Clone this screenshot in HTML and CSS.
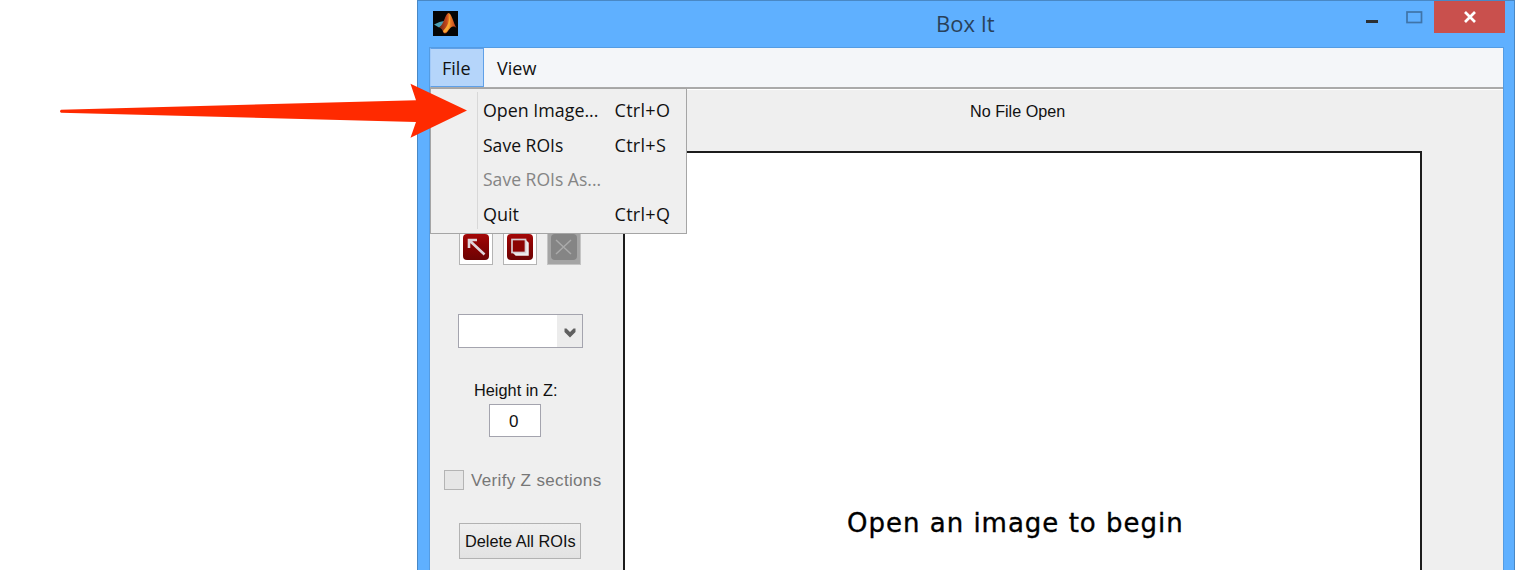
FILE: index.html
```html
<!DOCTYPE html>
<html lang="en">
<head>
<meta charset="utf-8">
<title>Box It</title>
<link rel="stylesheet" href="styles.css">
</head>
<body>
<div class="window">
  <header class="titlebar">
    <svg class="app-icon" viewBox="0 0 25 25">
      <defs>
        <linearGradient id="peak" x1="0" x2="1"><stop offset="0" stop-color="#6a2414"/><stop offset=".45" stop-color="#c8481c"/><stop offset=".6" stop-color="#f08a2a"/><stop offset="1" stop-color="#b8301a"/></linearGradient>
      </defs>
      <rect width="25" height="25" fill="#050505"/>
      <path d="M1 13.500 L6.500 11 L11 10 L14 5 L10 14 L6 16.500 Z" fill="#4b9fb5"/>
      <path d="M6 16.500 C11 14 12 3 15.500 2 C18.500 2 20 11 23.500 17 C20 14 17.500 16 15 20 C13.500 22.500 12 23 10.500 22 C9.500 19 8.500 17 6 16.500 Z" fill="url(#peak)"/>
      <path d="M16 3 C17 9 15 15 10 20 C11 23 13.500 22 15 19 C17 16 18 10 16 3 Z" fill="#f9a733"/>
    </svg>
    <h1 class="title">Box It</h1>
    <div class="controls">
      <svg class="min-max" viewBox="0 0 70 32"><rect x="2" y="19" width="12" height="3" fill="#2b2f33"/><rect x="43" y="11" width="14.500" height="10.500" fill="none" stroke="#3f74a8" stroke-width="1.700"/></svg>
      <div class="close"><svg viewBox="0 0 14 12"><path d="M2 1 L12 11 M12 1 L2 11" stroke="#fff" stroke-width="2.700"/></svg></div>
    </div>
  </header>
  <div class="client">
    <nav class="menubar">
      <div class="menu-item active">File</div>
      <div class="menu-item">View</div>
    </nav>
    <div class="workspace">
      <aside class="sidebar">
        <div class="tools">
          <div class="tool"><svg viewBox="0 0 26 26"><rect width="26" height="26" rx="4" fill="url(#red)"/><defs><linearGradient id="red" x1="0" y1="0" x2="0" y2="1"><stop offset="0" stop-color="#a40808"/><stop offset=".4" stop-color="#8c0303"/><stop offset="1" stop-color="#6c0404"/></linearGradient></defs><path d="M6 14 V6 H14 M7 7 L21.500 20.500" fill="none" stroke="#e0d5da" stroke-width="2.600"/></svg></div>
          <div class="tool"><svg viewBox="0 0 26 26"><rect width="26" height="26" rx="4" fill="url(#red)"/><path d="M7 19 H19 V7 L21 9 V21 H9 Z" fill="#eee" stroke="#eee" stroke-width="1.500"/><rect x="5" y="5.500" width="13.500" height="13" fill="#8c0303" stroke="#d8cdd2" stroke-width="1.700"/></svg></div>
          <div class="tool disabled"><svg viewBox="0 0 26 26"><rect width="26" height="26" rx="4" fill="#858585"/><path d="M5 6 L20 20 M20 6 L5 20" stroke="#aaa" stroke-width="1.500"/></svg></div>
        </div>
        <div class="combo"><div class="combo-arrow"><svg viewBox="0 0 12 10"><path d="M.500 .500 L2.500 .500 L6 4 L9.500 .500 L11.500 .500 V4 L6 9.500 L.500 4 Z" fill="#606060"/></svg></div></div>
        <label class="height-label"><span class="t-height">Height in Z:</span></label>
        <div class="height-input"><span class="t-zero">0</span></div>
        <div class="verify"><i class="checkbox"></i><span class="t-verify">Verify Z sections</span></div>
        <div class="delete"><span class="t-delete">Delete All ROIs</span></div>
      </aside>
      <main class="viewer">
        <div class="status"><span class="t-status">No File Open</span></div>
        <div class="axes"><span class="t-begin">Open an image to begin</span></div>
      </main>
    </div>
  </div>
</div>
<div class="dropdown">
  <div class="row"><span class="name t-open">Open Image...</span><span class="key">Ctrl+O</span></div>
  <div class="row"><span class="name t-save">Save ROIs</span><span class="key">Ctrl+S</span></div>
  <div class="row off"><span class="name t-save">Save ROIs As...</span></div>
  <div class="row"><span class="name">Quit</span><span class="key">Ctrl+Q</span></div>
</div>
<svg class="pointer" viewBox="0 0 410 56"><path d="M1 26.700 L356 17.300 L350.500 0.800 L407 27.500 L350.500 54.700 L356 39 L1 29.700 Q-1 28.200 1 26.700 Z" fill="#ff2a00"/></svg>
</body>
</html>
```
FILE: styles.css
```css
* { box-sizing: border-box; }
body { margin: 0; width: 1515px; height: 570px; overflow: hidden; background: #fff; padding-left: 417px; font-family: "Open Sans", "Noto Sans", sans-serif; color: #111; }
svg { display: block; }
span { display: inline-block; white-space: nowrap; transform-origin: 0 50%; }

.window { width: 1098px; height: 570px; background: #5fb0ff; border: 1px solid #4988c5; border-bottom: 0; display: flex; flex-direction: column; }
.titlebar { height: 46px; flex: none; display: flex; align-items: flex-start; }
.app-icon { width: 25px; height: 25px; margin: 10px 0 0 15px; }
.title { margin: 4px 0 0 478px; font-size: 22px; line-height: 36px; font-weight: 400; color: #29415a; width: 80px; }
.controls { margin-left: auto; display: flex; padding-right: 9px; }
.min-max { width: 70px; height: 32px; }
.close { width: 71px; height: 32px; background: #c9504d; display: flex; align-items: center; justify-content: center; }
.close svg { width: 14px; height: 12px; }

.client { flex: 1; min-height: 0; margin: 0 10px 0 11px; border: 1px solid #549ce3; border-bottom: 0; background: #efefef; }
.menubar { height: 41px; background: #f4f6f9; border-bottom: 2px solid #aaa; display: flex; font-size: 18px; line-height: 36px; }
.menu-item { padding: 2px 0 0 13px; height: 39px; width: 54px; }
.menu-item.active { background: #b5d5fa; border: 1px solid #5fa0e8; border-left-color: #a3caf8; padding: 1px 0 0 11px; }
.workspace { display: flex; height: 482px; border-top: 1px solid #fff; }

.sidebar { width: 193px; flex: none; display: flex; flex-direction: column; padding-top: 140px; font-family: "Liberation Sans", Arial, sans-serif; font-size: 17px; }
.tools { display: flex; gap: 10px; padding-left: 29px; }
.tool { width: 34px; height: 35px; background: #fff; border: 1px solid #b4b4b4; padding: 3px; }
.tool svg { width: 26px; height: 26px; }
.tool.disabled { background: #a5a5a5; border-color: #c4c4c4; }
.combo { margin: 49px 0 0 28px; width: 125px; height: 34px; background: #fff; border: 1px solid #a4a4ae; display: flex; justify-content: flex-end; }
.combo-arrow { width: 25px; background: #ececec; display: flex; align-items: center; justify-content: center; }
.combo-arrow svg { width: 12px; height: 10px; margin-top: 3px; }
.height-label { margin: 32px 0 0 44px; line-height: 22px; height: 22px; }
.t-height { transform: scaleX(.96); }
.height-input { margin: 2px 0 0 59px; width: 52px; height: 33px; line-height: 33px; background: #fff; border: 1px solid #a4a4ae; padding-left: 19px; }
.verify { margin: 33px 0 0 14px; height: 20px; display: flex; align-items: center; color: #777; }
.t-verify { letter-spacing: .34px; position: relative; top: 1px; }
.checkbox { width: 20px; height: 20px; background: #e6e6e6; border: 1px solid #b4b4b4; margin-right: 7px; }
.delete { margin: 33px 0 0 29px; width: 122px; height: 36px; line-height: 35px; border: 1.500px solid #b2b2b2; background: linear-gradient(#efefef, #e2e2e2); padding-left: 5px; }
.t-delete { transform: scaleX(.96); }

.viewer { width: 799px; display: flex; flex-direction: column; }
.status { height: 61px; padding: 10px 0 0 347px; font: 17px/24px "Liberation Sans", Arial, sans-serif; }
.t-status { transform: scaleX(.95); }
.axes { flex: 1; background: #fff; border: 2px solid #1c1c1c; border-bottom: 0; padding: 354px 0 0 222px; font: 26px/32px "DejaVu Sans", sans-serif; color: #000; }
.t-begin { letter-spacing: 1px; -webkit-text-stroke: .35px #000; }

.dropdown { position: absolute; left: 430px; top: 88px; width: 257px; height: 146px; background: linear-gradient(90deg, transparent 46px, #d8d8d8 46px, #d8d8d8 47px, transparent 47px) 0 3px / 100% 137px no-repeat #efefef; border: 1px solid #a5a5a5; padding: 4px 0 0 52px; font-size: 18px; }
.row { height: 34.500px; line-height: 34px; display: flex; }
.name { width: 131.500px; }
.key { letter-spacing: .3px; }
.t-open { transform: scaleX(.99); }
.t-save { transform: scaleX(.975); }
.off { color: #858585; }
.pointer { position: absolute; left: 60px; top: 83px; width: 410px; height: 56px; }
```
